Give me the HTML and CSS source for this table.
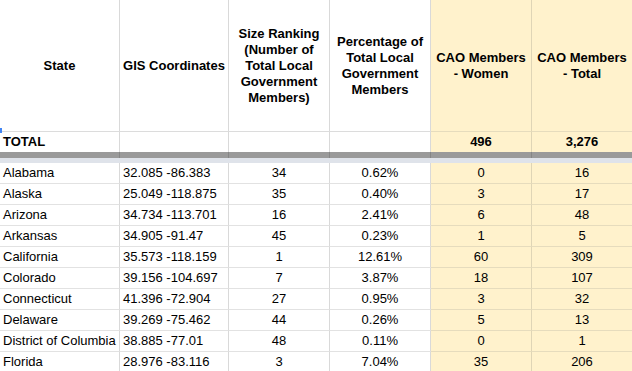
FILE: index.html
```html
<!DOCTYPE html>
<html lang="en">
<head>
    <meta charset="UTF-8">
    <title>CAO Members by State</title>
    <link rel="stylesheet" href="styles.css">
</head>
<body>
    <div class="sheet-wrap">
        <span class="cell-marker"></span>
        <table class="sheet">
            <colgroup>
                <col class="c-state">
                <col class="c-gis">
                <col class="c-num">
                <col class="c-num">
                <col class="c-num">
                <col class="c-num">
            </colgroup>
            <thead>
                <tr class="head-row">
                    <th>State</th>
                    <th>GIS Coordinates</th>
                    <th>Size Ranking (Number of Total Local Government Members)</th>
                    <th>Percentage of Total Local Government Members</th>
                    <th class="hl">CAO Members - Women</th>
                    <th class="hl">CAO Members - Total</th>
                </tr>
            </thead>
            <tbody>
                <tr class="total-row">
                    <td class="left">TOTAL</td>
                    <td></td>
                    <td></td>
                    <td></td>
                    <td class="hl">496</td>
                    <td class="hl">3,276</td>
                </tr>
                <tr class="freeze-bar">
                    <td></td><td></td><td></td><td></td><td></td><td></td>
                </tr>
                <tr class="freeze-gap">
                    <td colspan="6"></td>
                </tr>
                <tr>
                    <td class="left">Alabama</td>
                    <td class="left">32.085 -86.383</td>
                    <td>34</td>
                    <td>0.62%</td>
                    <td class="hl">0</td>
                    <td class="hl">16</td>
                </tr>
                <tr>
                    <td class="left">Alaska</td>
                    <td class="left">25.049 -118.875</td>
                    <td>35</td>
                    <td>0.40%</td>
                    <td class="hl">3</td>
                    <td class="hl">17</td>
                </tr>
                <tr>
                    <td class="left">Arizona</td>
                    <td class="left">34.734 -113.701</td>
                    <td>16</td>
                    <td>2.41%</td>
                    <td class="hl">6</td>
                    <td class="hl">48</td>
                </tr>
                <tr>
                    <td class="left">Arkansas</td>
                    <td class="left">34.905 -91.47</td>
                    <td>45</td>
                    <td>0.23%</td>
                    <td class="hl">1</td>
                    <td class="hl">5</td>
                </tr>
                <tr>
                    <td class="left">California</td>
                    <td class="left">35.573 -118.159</td>
                    <td>1</td>
                    <td>12.61%</td>
                    <td class="hl">60</td>
                    <td class="hl">309</td>
                </tr>
                <tr>
                    <td class="left">Colorado</td>
                    <td class="left">39.156 -104.697</td>
                    <td>7</td>
                    <td>3.87%</td>
                    <td class="hl">18</td>
                    <td class="hl">107</td>
                </tr>
                <tr>
                    <td class="left">Connecticut</td>
                    <td class="left">41.396 -72.904</td>
                    <td>27</td>
                    <td>0.95%</td>
                    <td class="hl">3</td>
                    <td class="hl">32</td>
                </tr>
                <tr>
                    <td class="left">Delaware</td>
                    <td class="left">39.269 -75.462</td>
                    <td>44</td>
                    <td>0.26%</td>
                    <td class="hl">5</td>
                    <td class="hl">13</td>
                </tr>
                <tr>
                    <td class="left">District of Columbia</td>
                    <td class="left">38.885 -77.01</td>
                    <td>48</td>
                    <td>0.11%</td>
                    <td class="hl">0</td>
                    <td class="hl">1</td>
                </tr>
                <tr>
                    <td class="left">Florida</td>
                    <td class="left">28.976 -83.116</td>
                    <td>3</td>
                    <td>7.04%</td>
                    <td class="hl">35</td>
                    <td class="hl">206</td>
                </tr>
            </tbody>
        </table>
    </div>
</body>
</html>
```

FILE: styles.css
```css
body {
    margin: 0;
    font-family: "Liberation Sans", Arial, sans-serif;
    font-size: 13px;
    color: #000;
    background: #fff;
    overflow: hidden;
}
.sheet-wrap {
    position: relative;
}
.cell-marker {
    position: absolute;
    left: 0;
    top: 128px;
    width: 2px;
    height: 5px;
    background: #4285f4;
}
.sheet {
    border-collapse: separate;
    border-spacing: 0;
    table-layout: fixed;
    width: 633px;
}
.c-state { width: 120px; }
.c-gis { width: 109px; }
.c-num { width: 101px; }
.sheet th,
.sheet td {
    box-sizing: border-box;
    border-right: 1px solid #d9d9d9;
    border-bottom: 1px solid #e2e2e2;
    padding: 0 3px;
    text-align: center;
    white-space: nowrap;
    overflow: hidden;
}
.sheet th {
    height: 132px;
    font-weight: bold;
    line-height: 16px;
    white-space: normal;
    vertical-align: middle;
    border-bottom-color: #dcdcdc;
}
.sheet td {
    height: 21px;
    line-height: 20px;
}
.sheet .left {
    text-align: left;
}
.sheet .hl {
    background: #fff2cc;
    border-right-color: #dfd5b6;
    border-bottom-color: #e6dcbd;
}
.total-row td {
    font-weight: bold;
    height: 20px;
    line-height: 20px;
    border-bottom: none;
}
.sheet .freeze-bar td {
    height: 6px;
    line-height: 0;
    background: #9a9a9a;
    border-right-color: #868686;
    border-bottom: none;
}
.sheet .freeze-gap td {
    height: 5px;
    line-height: 0;
    padding: 0;
    background: #dfe3ea;
    border: none;
}
```
